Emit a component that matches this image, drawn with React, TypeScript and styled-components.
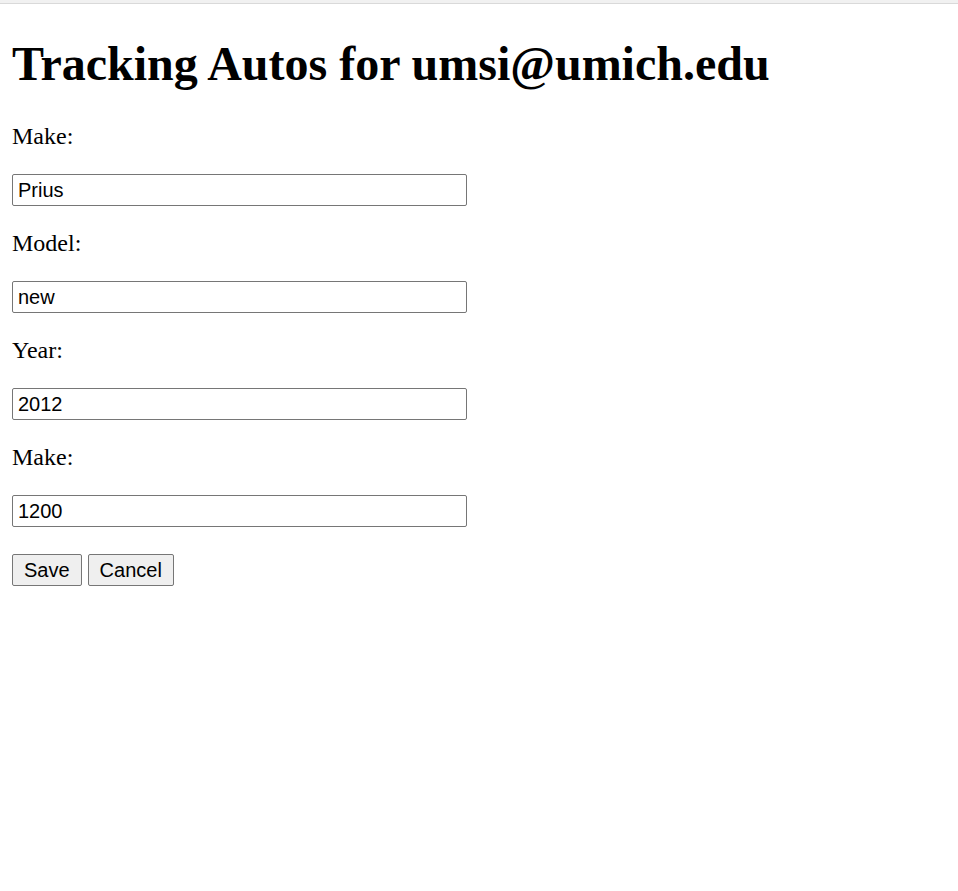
import React from "react";
import styled, { createGlobalStyle } from "styled-components";

const GlobalStyle = createGlobalStyle`
  html, body {
    margin: 0;
    padding: 0;
    background: #ffffff;
  }
  body {
    font-family: "Liberation Serif", "Times New Roman", serif;
    font-size: 24px;
    color: #000000;
  }
`;

const TopStrip = styled.div`
  height: 3px;
  background: #f1f1f1;
  border-bottom: 1px solid #d9d9d9;
`;

const Page = styled.div`
  padding: 12px;
`;

const Heading = styled.h1`
  font-size: 48px;
  font-weight: 700;
  margin: 20px 0 32px;
`;

const Form = styled.form`
  display: block;
`;

const Label = styled.p`
  margin: 24px 0;
`;

const Field = styled.p`
  margin: 24px 0;
  line-height: 1;
`;

const TextInput = styled.input`
  box-sizing: border-box;
  width: 455px;
  height: 32px;
  padding: 1px 5px;
  border: 1px solid #767676;
  border-radius: 2px;
  font-family: "Liberation Sans", Arial, sans-serif;
  font-size: 20px;
  color: #000000;
  background: #ffffff;
  vertical-align: top;
`;

const Actions = styled.p`
  margin: 27px 0 24px;
  display: flex;
  gap: 6px;
  line-height: 1;
`;

const Button = styled.button`
  box-sizing: border-box;
  height: 32px;
  padding: 1px 11px;
  border: 1px solid #767676;
  border-radius: 2px;
  background: #efefef;
  font-family: "Liberation Sans", Arial, sans-serif;
  font-size: 20px;
  color: #000000;
`;

const fields = [
  { label: "Make:", value: "Prius" },
  { label: "Model:", value: "new" },
  { label: "Year:", value: "2012" },
  { label: "Make:", value: "1200" },
];

export default function App() {
  return (
    <>
      <GlobalStyle />
      <TopStrip />
      <Page>
        <Heading>Tracking Autos for umsi@umich.edu</Heading>
        <Form onSubmit={(e) => e.preventDefault()}>
          {fields.map((f, i) => (
            <React.Fragment key={i}>
              <Label>{f.label}</Label>
              <Field>
                <TextInput type="text" defaultValue={f.value} />
              </Field>
            </React.Fragment>
          ))}
          <Actions>
            <Button type="submit">Save</Button>
            <Button type="button">Cancel</Button>
          </Actions>
        </Form>
      </Page>
    </>
  );
}
